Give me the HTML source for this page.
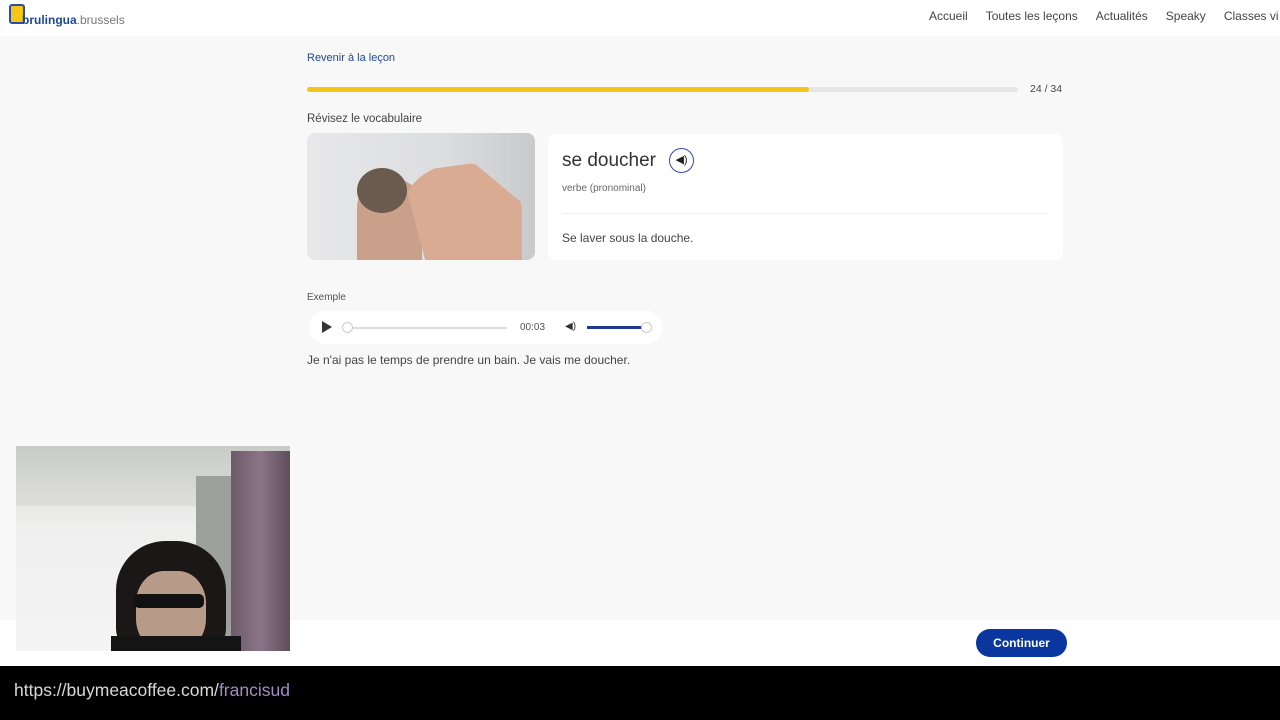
<!DOCTYPE html>
<html><head><meta charset="utf-8"><style>
*{margin:0;padding:0;box-sizing:border-box}
body{width:1280px;height:720px;overflow:hidden;background:#f8f8f8;font-family:"Liberation Sans",sans-serif;position:relative;color:#333}
.abs{position:absolute}
</style></head><body>
<div class="abs" style="left:0;top:0;width:1280px;height:36px;background:#fff"></div>
<div class="abs" style="left:9px;top:4px;width:16px;height:20px;background:#f5c518;border:2px solid #2b4fa0;border-radius:3px"></div>
<div class="abs" style="left:22px;top:13px;font-size:12px;font-weight:bold;color:#1d4796">brulingua<span style="font-weight:normal;color:#777">.brussels</span></div>
<div class="abs" style="top:9px;left:929px;font-size:12px;color:#444;white-space:nowrap">Accueil<span style="margin-left:18px">Toutes les leçons</span><span style="margin-left:18px">Actualités</span><span style="margin-left:18px">Speaky</span><span style="margin-left:18px">Classes vi</span></div>
<div class="abs" style="left:307px;top:52px;font-size:11px;color:#1d4796">Revenir à la leçon</div>
<div class="abs" style="left:307px;top:87px;width:711px;height:5px;background:#e6e6e6;border-radius:3px"></div>
<div class="abs" style="left:307px;top:87px;width:502px;height:5px;background:#f5c518;border-radius:3px"></div>
<div class="abs" style="left:1030px;top:83px;font-size:10.5px;color:#444">24 / 34</div>
<div class="abs" style="left:307px;top:113px;font-size:11.5px;color:#444">Révisez le vocabulaire</div>
<div class="abs" style="left:307px;top:133px;width:228px;height:127px;border-radius:8px;overflow:hidden;background:linear-gradient(90deg,#e8e8ea,#dcdde0 60%,#c9cacc)">
<div class="abs" style="left:50px;top:45px;width:65px;height:85px;border-radius:30px 30px 0 0;background:#c9a08a"></div>
<div class="abs" style="left:50px;top:35px;width:50px;height:45px;border-radius:50%;background:#6b5a4e"></div>
<div class="abs" style="left:95px;top:30px;width:120px;height:100px;border-radius:50% 50% 0 0;background:#d8ab92;clip-path:polygon(0 10%,60% 0,100% 40%,100% 100%,20% 100%)"></div>
</div>
<div class="abs" style="left:548px;top:134px;width:515px;height:126px;background:#fff;border-radius:8px"></div>
<div class="abs" style="left:562px;top:150px;font-size:19px;color:#333">se doucher</div>
<div class="abs" style="left:669px;top:148px;width:25px;height:25px;border:1.5px solid #2b4fa0;border-radius:50%;font-size:11px;text-align:center;line-height:22px;color:#222">◀︎)</div>
<div class="abs" style="left:562px;top:183px;font-size:10px;color:#666">verbe (pronominal)</div>
<div class="abs" style="left:562px;top:213px;width:486px;height:1px;background:#eee"></div>
<div class="abs" style="left:562px;top:231px;font-size:12px;color:#444">Se laver sous la douche.</div>
<div class="abs" style="left:307px;top:292px;font-size:10px;color:#555">Exemple</div>
<div class="abs" style="left:309px;top:311px;width:353px;height:33px;background:#fff;border-radius:16px"></div>
<div class="abs" style="left:322px;top:321px;width:0;height:0;border-left:10px solid #333;border-top:6px solid transparent;border-bottom:6px solid transparent"></div>
<div class="abs" style="left:345px;top:327px;width:162px;height:2px;background:#ddd"></div>
<div class="abs" style="left:342px;top:322px;width:11px;height:11px;border-radius:50%;background:#fff;border:1px solid #ccc"></div>
<div class="abs" style="left:520px;top:322px;font-size:10px;color:#555">00:03</div>
<div class="abs" style="left:565px;top:321px;font-size:10px;color:#333">◀︎)</div>
<div class="abs" style="left:587px;top:326px;width:58px;height:3px;background:#1d3a8f"></div>
<div class="abs" style="left:641px;top:322px;width:11px;height:11px;border-radius:50%;background:#fff;border:1px solid #ccc"></div>
<div class="abs" style="left:307px;top:353px;font-size:12px;color:#444">Je n'ai pas le temps de prendre un bain. Je vais me doucher.</div>
<div class="abs" style="left:0;top:620px;width:1280px;height:46px;background:#fff"></div>
<div class="abs" style="left:976px;top:629px;width:91px;height:28px;background:#0a36a0;border-radius:14px;color:#fff;font-size:12px;font-weight:bold;text-align:center;line-height:28px">Continuer</div>
<div class="abs" style="left:0;top:666px;width:1280px;height:54px;background:#000"></div>
<div class="abs" style="left:14px;top:680px;font-size:17.5px;color:#d8d8d8">https://buymeacoffee.com/<span style="color:#a08cc0">francisud</span></div>
<div class="abs" style="left:16px;top:446px;width:274px;height:205px;overflow:hidden;background:linear-gradient(180deg,#d8dad6 0%,#eeefee 40%,#f4f4f4 100%)">
<div class="abs" style="left:0;top:0;width:274px;height:60px;background:linear-gradient(180deg,#c9cbc7,#dedfdc)"></div>
<div class="abs" style="left:180px;top:30px;width:35px;height:175px;background:#9ea09d"></div>
<div class="abs" style="left:215px;top:5px;width:59px;height:200px;background:linear-gradient(90deg,#6d5a68,#8b7589,#5e4d5a)"></div>
<div class="abs" style="left:100px;top:95px;width:110px;height:110px;border-radius:45% 45% 20% 20%;background:#1a1716"></div>
<div class="abs" style="left:120px;top:125px;width:70px;height:80px;border-radius:40%;background:#b89a88"></div>
<div class="abs" style="left:118px;top:148px;width:70px;height:14px;background:#111;border-radius:5px"></div>
<div class="abs" style="left:95px;top:190px;width:130px;height:20px;background:#141414"></div>
</div>
</body></html>
